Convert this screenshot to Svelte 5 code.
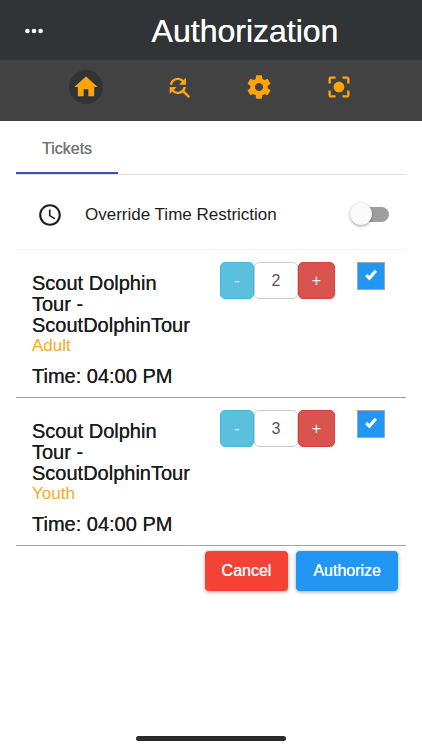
<script lang="ts">
	type Ticket = {
		id: string;
		name: string;
		category: string;
		time: string;
		quantity: number;
		selected: boolean;
	};

	let overrideTime: boolean = $state(false);
	let tickets: Ticket[] = $state([
		{
			id: 'adult',
			name: 'Scout Dolphin Tour - ScoutDolphinTour',
			category: 'Adult',
			time: '04:00 PM',
			quantity: 2,
			selected: true
		},
		{
			id: 'youth',
			name: 'Scout Dolphin Tour - ScoutDolphinTour',
			category: 'Youth',
			time: '04:00 PM',
			quantity: 3,
			selected: true
		}
	]);

	const navItems = [
		{ label: 'Home', active: true, path: 'M10 20v-6h4v6h5v-8h3L12 3 2 12h3v8z' },
		{
			label: 'Find tickets',
			active: false,
			path: 'M11 6c1.38 0 2.63.56 3.54 1.46L12 10h6V4l-2.05 2.05C14.68 4.78 12.93 4 11 4c-3.53 0-6.43 2.61-6.92 6H6.1c.46-2.28 2.48-4 4.9-4zm5.64 9.14c.66-.9 1.12-1.97 1.28-3.14H15.9c-.46 2.28-2.48 4-4.9 4-1.38 0-2.63-.56-3.54-1.46L10 12H4v6l2.05-2.05C7.32 17.22 9.07 18 11 18c1.55 0 2.98-.51 4.14-1.36L20 21.49 21.49 20l-4.85-4.86z'
		},
		{
			label: 'Settings',
			active: false,
			path: 'M19.43 12.98c.04-.32.07-.64.07-.98s-.03-.66-.07-.98l2.11-1.65c.19-.15.24-.42.12-.64l-2-3.46c-.12-.22-.39-.3-.61-.22l-2.49 1c-.52-.4-1.08-.73-1.69-.98l-.38-2.65C14.46 2.18 14.25 2 14 2h-4c-.25 0-.46.18-.49.42l-.38 2.65c-.61.25-1.17.59-1.69.98l-2.49-1c-.23-.09-.49 0-.61.22l-2 3.46c-.13.22-.07.49.12.64l2.11 1.65c-.04.32-.07.65-.07.98s.03.66.07.98l-2.11 1.65c-.19.15-.24.42-.12.64l2 3.46c.12.22.39.3.61.22l2.49-1c.52.4 1.08.73 1.69.98l.38 2.65c.03.24.24.42.49.42h4c.25 0 .46-.18.49-.42l.38-2.65c.61-.25 1.17-.59 1.69-.98l2.49 1c.23.09.49 0 .61-.22l2-3.46c.12-.22.07-.49-.12-.64l-2.11-1.65zM12 15.5c-1.93 0-3.5-1.57-3.5-3.5s1.57-3.5 3.5-3.5 3.5 1.57 3.5 3.5-1.57 3.5-3.5 3.5z'
		},
		{
			label: 'Scan',
			active: false,
			path: 'M12 7.4c-2.5 0-4.6 2.1-4.6 4.6s2.1 4.6 4.6 4.6 4.6-2.1 4.6-4.6-2.1-4.6-4.6-4.6zm-7 7.6H3v4c0 1.1.9 2 2 2h4v-2H5v-4zM5 5h4V3H5c-1.1 0-2 .9-2 2v4h2V5zm14-2h-4v2h4v4h2V5c0-1.1-.9-2-2-2zm0 16h-4v2h4c1.1 0 2-.9 2-2v-4h-2v4z'
		}
	];
</script>

<div class="page">
	<header>
		<button class="more" aria-label="Menu">
			<svg width="18" height="6" viewBox="0 0 18 6" fill="currentColor">
				<circle cx="2.4" cy="3" r="2.3" />
				<circle cx="9" cy="3" r="2.3" />
				<circle cx="15.6" cy="3" r="2.3" />
			</svg>
		</button>
		<h1>Authorization</h1>
	</header>

	<nav>
		{#each navItems as item}
			<button class="nav-item" class:active={item.active} aria-label={item.label}>
				<svg width="28" height="28" viewBox="0 0 24 24" fill="currentColor">
					<path d={item.path} />
				</svg>
			</button>
		{/each}
	</nav>

	<main>
		<div class="tabs" role="tablist">
			<button class="tab" role="tab" aria-selected="true">Tickets</button>
		</div>

		<div class="override">
			<svg width="26" height="26" viewBox="0 0 24 24" fill="currentColor">
				<path
					d="M11.99 2C6.47 2 2 6.48 2 12s4.47 10 9.99 10C17.52 22 22 17.52 22 12S17.52 2 11.99 2zM12 20c-4.42 0-8-3.58-8-8s3.58-8 8-8 8 3.58 8 8-3.58 8-8 8zm.5-13H11v6l5.25 3.15.75-1.23-4.5-2.67z"
				/>
			</svg>
			<label for="override">Override Time Restriction</label>
			<input id="override" class="switch" type="checkbox" bind:checked={overrideTime} />
		</div>

		{#each tickets as ticket (ticket.id)}
			<section class="ticket">
				<div class="info">
					<h2>{ticket.name}</h2>
					<p class="category">{ticket.category}</p>
					<p class="time">Time: {ticket.time}</p>
				</div>
				<div class="quantity">
					<button class="minus" aria-label="Remove one" onclick={() => (ticket.quantity -= 1)}>-</button>
					<input type="text" aria-label="Quantity" bind:value={ticket.quantity} />
					<button class="plus" aria-label="Add one" onclick={() => (ticket.quantity += 1)}>+</button>
				</div>
				<label class="check">
					<input type="checkbox" aria-label="Select ticket" bind:checked={ticket.selected} />
					{#if ticket.selected}
						<svg width="12" height="14" viewBox="0 0 12 14">
							<path d="M1.2 6.2l3.2 3L10.8 1.8" fill="none" stroke="#fff" stroke-width="3.2" />
						</svg>
					{/if}
				</label>
			</section>
		{/each}

		<div class="actions">
			<button class="cancel">Cancel</button>
			<button class="authorize">Authorize</button>
		</div>
	</main>

	<div class="home-bar"></div>
</div>

<style>
	:global(body) {
		background: #fff;
	}
	.page {
		min-height: 100vh;
		display: flex;
		flex-direction: column;
		font-family: 'Liberation Sans', Arial, sans-serif;
		color: #1c1c1c;
	}
	button,
	input {
		box-sizing: border-box;
		margin: 0;
		padding: 0;
		font-family: inherit;
		font-size: 16px;
	}
	button {
		border: none;
		background: none;
		cursor: pointer;
	}
	h1,
	h2,
	p {
		margin: 0;
	}
	svg {
		display: block;
	}
	/* medium weight, between regular and bold */
	h1,
	h2,
	.tab,
	.time,
	.actions button {
		font-weight: 400;
		text-shadow: 0 0 currentColor;
	}

	header {
		height: 60px;
		box-sizing: border-box;
		padding-top: 2px;
		display: flex;
		align-items: center;
		background: #303437;
		color: #fff;
	}
	.more {
		width: 68px;
		height: 40px;
		display: flex;
		align-items: center;
		justify-content: center;
		color: inherit;
	}
	h1 {
		flex: 1;
		font-size: 32px;
		line-height: 40px;
		text-align: center;
	}

	nav {
		height: 61px;
		box-sizing: border-box;
		padding: 0 69px 8px 59px;
		display: flex;
		align-items: center;
		justify-content: space-between;
		background: #424242;
	}
	.nav-item {
		color: #ffa50a;
	}
	.nav-item.active {
		margin: 0 10px;
		padding: 3px;
		border-radius: 50%;
		background: #303437;
	}

	main {
		padding: 0 16px;
	}
	.tabs {
		display: flex;
		border-bottom: 1px solid #e0e0e0;
	}
	.tab {
		height: 53px;
		padding: 4px 26px 0;
		border-bottom: 2px solid #3f51b5;
		color: #757575;
	}

	.override {
		height: 75px;
		box-sizing: border-box;
		padding: 5px 17px 0 21px;
		display: flex;
		align-items: center;
		border-bottom: 1px solid #f4f4f4;
	}
	.override label {
		flex: 1;
		padding-left: 22px;
		font-size: 17px;
	}
	.switch {
		appearance: none;
		position: relative;
		width: 36px;
		height: 15px;
		border-radius: 8px;
		background: #9e9e9e;
	}
	.switch::before {
		content: '';
		position: absolute;
		top: -4px;
		left: -3px;
		width: 22px;
		height: 22px;
		border-radius: 50%;
		background: #fafafa;
		box-shadow: 0 1px 3px rgba(0, 0, 0, 0.4);
	}
	.switch:checked::before {
		left: 17px;
	}

	.ticket {
		display: grid;
		grid-template-columns: minmax(0, 1fr) auto auto;
		align-items: start;
		gap: 22px;
		padding: 12px 21px 10px 16px;
		border-bottom: 1px solid #a3a3ab;
	}
	.info {
		padding-top: 11px;
	}
	h2,
	.time {
		font-size: 20px;
		line-height: 21px;
	}
	.category {
		font-size: 17px;
		line-height: 20px;
		color: #f9a825;
	}
	.time {
		margin-top: 10px;
	}
	.quantity {
		display: flex;
	}
	.quantity button,
	.quantity input {
		height: 37px;
		border: 1px solid;
		border-radius: 5px;
	}
	.quantity input {
		width: 44px;
		border-color: #ccc;
		text-align: center;
		color: #555;
	}
	.quantity button {
		padding-top: 1px;
		color: #e8f4f8;
	}
	.quantity .minus {
		width: 34px;
		background: #5bc0de;
		border-color: #46b8da;
	}
	.quantity .plus {
		width: 37px;
		background: #d9534f;
		border-color: #d43f3a;
	}
	.check {
		display: grid;
		place-items: center;
	}
	.check > * {
		grid-area: 1 / 1;
	}
	.check input {
		appearance: none;
		width: 28px;
		height: 28px;
		border: 1px solid #a0a6ac;
	}
	.check input:checked {
		background: #2196f3;
	}
	.check svg {
		pointer-events: none;
	}

	.actions {
		display: flex;
		justify-content: flex-end;
		gap: 8px;
		padding: 5px 8px;
	}
	.actions button {
		height: 40px;
		padding: 0 17px;
		border-radius: 4px;
		color: #fff;
		box-shadow: 0 1px 4px rgba(0, 0, 0, 0.35);
	}
	.cancel {
		background: #f44336;
	}
	.authorize {
		background: #2196f3;
	}

	.home-bar {
		width: 150px;
		height: 5px;
		margin: auto auto 9px;
		border-radius: 3px;
		background: #2a2a2a;
	}
</style>
